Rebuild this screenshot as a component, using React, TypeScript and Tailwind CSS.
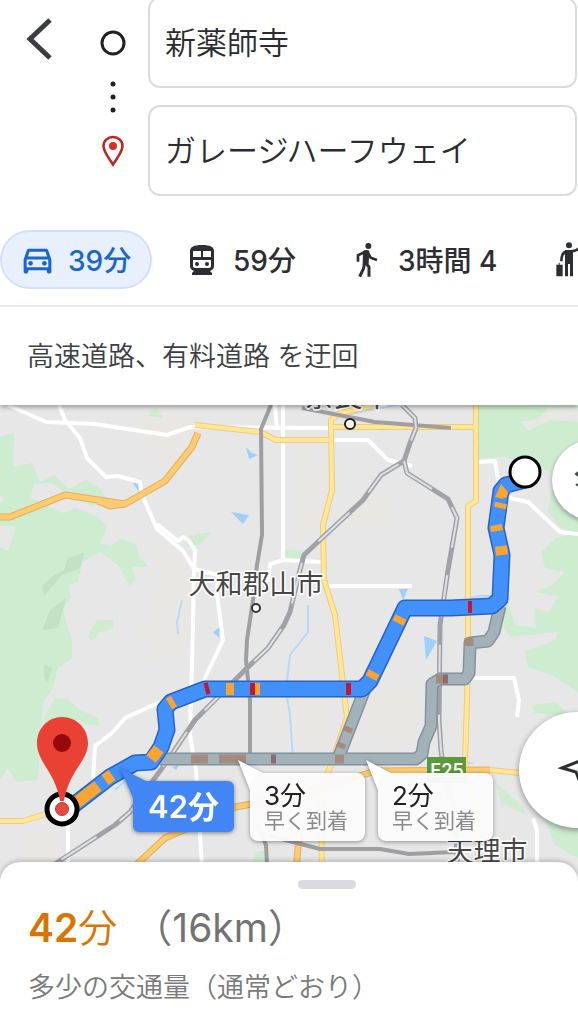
import { useState } from "react";
import { MdOutlineDirectionsCar } from "react-icons/md";

const FONT = "font-[Inter,'Noto_Sans_CJK_JP',sans-serif]";

type Mark = [number, number, number, number, string];

const AMBER = "#fba52f";
const RED = "#c4162c";
const MUTED = "#a48b80";

const greens = [
  "M0 436L14 433L13 467L32 463L40 482L54 475L69 489L86 480L101 489L107 500L92 506L68 494L52 483L34 484L30 498L62 513L75 508L97 516L107 527L100 543L110 546L122 539L136 545L140 558L149 567L132 567L136 578L130 586L118 565L100 552L82 562L78 582L68 585L71 597L63 610L66 622L72 640L72 658L58 668L52 690L43 702L42 722L38 780L16 782L8 768L0 780Z",
  "M148 416L156 407L163 418Z",
  "M182 537L211 532L200 545L188 547Z",
  "M97 620L113 620L113 629L100 632L92 641L88 638L90 631Z",
  "M55 698L68 699L80 710L98 718L100 725L88 725L78 720L60 722L48 735L44 718Z",
  "M285 550H303V560H285Z",
  "M253 862L256 852L266 850L268 870Z",
  "M480 405H578V535L561 528L548 512L551 492L562 478L541 468L505 457L475 459L472 442Z",
  "M578 533L555 538L541 552L545 568L565 572L552 585L535 592L558 596L549 612L534 608L536 628L515 625L507 600L503 628L511 637L558 632L555 640L525 652L528 667L551 675L578 692Z",
  "M532 705L555 702L570 716L534 713Z",
  "M495 782L521 805L527 815L501 803Z",
  "M545 818L578 824V858L555 845Z",
];

const greys = [
  "M0 525L16 527L8 551L0 547Z",
  "M0 494L4 500L0 503Z",
  "M521 422L538 419L548 408H578V422L550 420L528 431Z",
];

const darkGreens = [
  "M68 558L84 553L80 568L62 575L44 596L42 586L54 575L64 570Z",
  "M50 610L66 598L58 628L42 630Z",
  "M44 665L52 668L48 682L44 678Z",
];

const beige = [
  "M140 410H180L195 420L172 470L150 450L137 425Z",
  "M170 540L192 590L185 650L150 660L140 625L160 590L150 560Z",
  "M300 455L325 470L318 520L296 545Z",
  "M348 500L385 490L390 520L350 525Z",
  "M270 700L330 700L330 750L270 735Z",
  "M370 695L415 690L415 745L365 735Z",
  "M30 830L60 840L55 862H15Z",
];

const whiteRoads = [
  "M8 405L46 422L95 424L167 435L190 427L332 428",
  "M59 405L65 420L80 438L87 458L106 477L118 476L140 482L142 495L157 529L183 551L194 569L218 575L217 595L223 640L204 680",
  "M157 524L178 541L183 537L188 540L195 550L194 570L193 625L190 735L196 770L203 882",
  "M275 405L277 429",
  "M283 405V560L270 564L268 582",
  "M283 560L322 562",
  "M328 586H412",
  "M332 440H368L388 460L412 466",
  "M478 462L495 461L499 485",
  "M505 497L528 502L560 532L578 534",
  "M473 678H514L519 700L517 717",
  "M533 818L537 830V882",
  "M160 702L125 718L112 733L95 746L93 780",
  "M68 820V882",
];

const yellowRoads = [
  "M195 425L260 432L276 440H332",
  "M372 406L340 413L331 420L332 490L323 525L324 580L335 615L347 718L331 765L321 790L322 882",
  "M332 427H476",
  "M476 405V501L468 506L468 640L467 700L465 762L475 800L480 882",
  "M0 821H23L55 811",
  "M490 770L520 773",
];

const orangeRoads = [
  "M0 517H10L65 495L125 504L165 481L192 447L198 433",
  "M98 501L110 506L125 504",
  "M118 882L165 838L200 823L235 806",
  "M295 882L300 825",
  "M230 808L300 795L375 771L490 770",
];

const rails = [
  "M271 405L261 429L262 535L257 565L253 600L247 640L246 660L250 700L250 755",
  "M302 408L375 422L451 428",
  "M270 836L320 849L380 849L409 854L455 852",
  "M258 825L266 845L268 882",
];

const stripedRails = [
  "M402 405L415 418L416 428L410 443L404 461L381 475L363 500L320 540L304 555L300 570L290 612L284 625L268 648L245 670L195 720L168 760L130 812L115 825L50 867",
  "M404 461L407 473L448 499L457 518L448 570L440 625L439 720L441 750L445 780L455 810L458 882",
];

const water = [
  "M246 447L252 453L258 455L249 459Z",
  "M231 512L249 515L243 524Z",
  "M424 636L437 641L426 660Z",
  "M399 589L408 589L403 600Z",
  "M132 482L138 484L139 492Z",
  "M213 632L220 627L219 638Z",
  "M172 767L180 764L176 770Z",
  "M466 762L475 763L466 764Z",
];

const streams = [
  "M182 600L177 622L178 634",
  "M308 605V632L290 655L286 690L290 715L293 760",
  "M115 790L126 780L132 776",
  "M470 598L478 596H500",
  "M350 414L400 404",
];

const mainRoute =
  "M66 811L110 777L135 763L151 762L161 747L167 730L165 709L171 702L205 689H362L370 681L405 608L451 608L492 606L500 599L502 555L496 528L501 491L506 485L525 480";

const altRoutes = [
  "M500 606L494 632L488 641L470 643L469 673L465 679L440 679L432 684L431 726L424 742L422 754L416 759H160",
  "M365 689L339 756",
];

const altMarks: Mark[] = [
  [191, 759, 208, 759, MUTED],
  [219, 759, 246, 759, MUTED],
  [271, 759, 276, 759, "#8b6b6d"],
  [335, 759, 344, 759, MUTED],
  [349, 727, 347, 732, MUTED],
  [342, 743, 340, 748, MUTED],
  [436, 679, 443, 679, MUTED],
  [443, 679, 448, 679, "#8b6b6d"],
  [469, 638, 469, 646, MUTED],
];

const mainMarks: Mark[] = [
  [501, 503, 500, 508, AMBER],
  [496, 525, 497, 531, AMBER],
  [501, 546, 502, 555, AMBER],
  [401, 617, 398, 623, AMBER],
  [374, 672, 371, 678, AMBER],
  [468, 607, 472, 607, RED],
  [346, 689, 351, 689, RED],
  [255, 689, 260, 689, AMBER],
  [250, 689, 255, 689, RED],
  [226, 689, 234, 689, AMBER],
  [205, 689, 209, 688, RED],
  [169, 704, 174, 701, AMBER],
  [151, 759, 159, 749, AMBER],
  [105, 780, 112, 775, AMBER],
  [76, 803, 98, 786, AMBER],
];

function Strokes({ paths, color, width }: { paths: string[]; color: string; width: number }) {
  return (
    <g fill="none" stroke={color} strokeWidth={width} strokeLinejoin="round">
      {paths.map((d) => (
        <path key={d} d={d} />
      ))}
    </g>
  );
}

function Areas({ paths, color }: { paths: string[]; color: string }) {
  return (
    <g fill={color}>
      {paths.map((d) => (
        <path key={d} d={d} />
      ))}
    </g>
  );
}

function Marks({ marks, width }: { marks: Mark[]; width: number }) {
  return (
    <g strokeWidth={width}>
      {marks.map(([x1, y1, x2, y2, color]) => (
        <line key={`${x1}-${y1}`} x1={x1} y1={y1} x2={x2} y2={y2} stroke={color} />
      ))}
    </g>
  );
}

function MapLabel({ x, y, size, children }: { x: number; y: number; size: number; children: string }) {
  return (
    <text
      x={x}
      y={y}
      fontSize={size}
      textAnchor="middle"
      fill="#474747"
      stroke="#ffffff"
      strokeWidth="3"
      strokeLinejoin="round"
      paintOrder="stroke"
    >
      {children}
    </text>
  );
}

function MapCanvas() {
  return (
    <svg
      viewBox="0 405 578 477"
      preserveAspectRatio="xMinYMin slice"
      className="absolute inset-0 h-full w-full"
      role="img"
      aria-label="地図"
    >
      <rect x="0" y="405" width="578" height="477" fill="#e7e7e7" />
      <Areas paths={beige} color="#e9e7e3" />
      <Areas paths={greens} color="#ceeccf" />
      <Areas paths={greys} color="#e7e7e4" />
      <Areas paths={darkGreens} color="#c1e2c4" />
      <Areas paths={water} color="#9fd0fb" />
      <Strokes paths={streams} color="#b4dafa" width={2} />
      <Strokes paths={whiteRoads} color="#ffffff" width={4} />
      <Strokes paths={yellowRoads} color="#ecce78" width={6} />
      <Strokes paths={yellowRoads} color="#ffe698" width={4} />
      <Strokes paths={orangeRoads} color="#e6ae58" width={7} />
      <Strokes paths={orangeRoads} color="#fccb72" width={5} />
      <Strokes paths={rails} color="#9f9fa1" width={4} />
      <Strokes paths={stripedRails} color="#a0a2a6" width={5} />
      <g fill="none" stroke="#dfe1e4" strokeWidth="2" strokeDasharray="42 28">
        {stripedRails.map((d) => (
          <path key={d} d={d} />
        ))}
      </g>

      <Strokes paths={altRoutes} color="#84929b" width={13} />
      <Strokes paths={altRoutes} color="#a3b1b9" width={10} />
      <Marks marks={altMarks} width={9} />

      <Strokes paths={[mainRoute]} color="#2863c4" width={17} />
      <Strokes paths={[mainRoute]} color="#4290fb" width={14} />
      <Marks marks={mainMarks} width={12} />
      <path d="M495 497L501 484L508 492L507 497L502 499Z" fill={AMBER} />

      <circle cx="256" cy="608" r="4" fill="#ffffff" stroke="#333333" strokeWidth="2" />
      <MapLabel x={256} y={594} size={27}>大和郡山市</MapLabel>
      <MapLabel x={348} y={407} size={29}>奈良市</MapLabel>
      <circle cx="350" cy="424" r="5" fill="#ffffff" stroke="#1c1c1c" strokeWidth="2" />
      <MapLabel x={487} y={861} size={27}>天理市</MapLabel>

      <rect x="427" y="757" width="39" height="26" fill="#5a9a3c" />
      <text x="447" y="777" fontSize="18" fontWeight="600" textAnchor="middle" fill="#ffffff">
        E25
      </text>

      <circle cx="525" cy="472" r="15" fill="#ffffff" stroke="#000000" strokeWidth="3" />

      <circle cx="62" cy="809" r="15" fill="#ffffff" stroke="#000000" strokeWidth="5" />
      <path
        d="M62 717C76.500 717 88 728.500 88 743C88 754 81 762 75 772C69 782 66 790 64 801H60C58 790 55 782 49 772C43 762 37 754 37 743C37 728.500 48 717 62 717Z"
        fill="#e94235"
      />
      <circle cx="62" cy="743" r="9" fill="#950a0a" />
      <circle cx="62" cy="809" r="6.500" fill="#e34a42" stroke="#c8342e" strokeWidth="1" />
    </svg>
  );
}

function Tail({ className, d }: { className: string; d: string }) {
  return (
    <svg viewBox="0 0 30 30" className={`absolute size-[30px] ${className}`} aria-hidden="true">
      <path d={d} fill="currentColor" />
    </svg>
  );
}

function AltBubble({ place, time }: { place: string; time: string }) {
  return (
    <button
      type="button"
      className={`absolute flex h-[68px] w-[115px] flex-col rounded-lg bg-white/95 pt-2 pl-[14px] text-left drop-shadow-[0_1px_2px_rgba(0,0,0,0.4)] ${place}`}
    >
      <Tail className="-top-[13px] -left-[12px] text-white" d="M0 0L25 13H20L12 21V30Z" />
      <span className="relative text-[26px] leading-[30px] text-[#222222]">{time}</span>
      <span className="relative text-[21px] leading-5 whitespace-nowrap text-[#8a8a8a]">早く到着</span>
    </button>
  );
}

function TrainIcon() {
  return (
    <svg viewBox="0 0 26 32" className="h-8 w-[26px]" aria-hidden="true">
      <path
        fillRule="evenodd"
        fill="currentColor"
        d="M1 7C1 3 5 1 13 1S25 3 25 7V22C25 25 23 26 21 27L23 29V31H3V29L5 27C3 26 1 25 1 22ZM4 7V13H12V7ZM14 7V13H22V7ZM4 16V22C4 23 5 24 6 24H20C21 24 22 23 22 22V16Z"
      />
      <circle cx="8" cy="20" r="2" fill="currentColor" />
      <circle cx="18" cy="20" r="2" fill="currentColor" />
    </svg>
  );
}

function WalkIcon() {
  return (
    <svg viewBox="0 0 66 102" className="h-[34px] w-[22px]" aria-hidden="true">
      <circle cx="37" cy="9" r="9" fill="currentColor" />
      <path fill="currentColor" d="M21 24Q30 19 40 23L38 62L20 66Z" />
      <g fill="none" stroke="currentColor">
        <path d="M6 56V37L28 26" strokeWidth="8" />
        <path d="M34 26L44 44L63 51" strokeWidth="8" />
        <path d="M26 60L22 78L11 101" strokeWidth="9" />
        <path d="M28 58L39 72V101" strokeWidth="9" />
      </g>
    </svg>
  );
}

function HailIcon() {
  return (
    <svg viewBox="0 0 84 105" className="h-[35px] w-[28px]" aria-hidden="true">
      <circle cx="39" cy="10" r="9" fill="currentColor" />
      <path fill="currentColor" d="M27 24H51V103H42V66H36V103H27Z" />
      <g fill="none" stroke="currentColor">
        <path d="M32 28Q16 32 16 58" strokeWidth="8" />
        <path d="M46 28Q66 27 76 10" strokeWidth="8" />
      </g>
      <path fill="currentColor" d="M8 62H11V68H20V103H1V68H8Z" />
    </svg>
  );
}

const modes = [
  { id: "car", label: "39分", name: "車", icon: <MdOutlineDirectionsCar className="size-[37px]" />, box: "w-[152px] pl-4" },
  { id: "train", label: "59分", name: "電車", icon: <TrainIcon />, box: "w-[167px] pl-[29px]" },
  { id: "walk", label: "3時間 4", name: "徒歩", icon: <WalkIcon />, box: "w-[230px] pl-[27px]" },
  { id: "hail", label: "", name: "配車サービス", icon: <HailIcon />, box: "w-[60px]" },
];

export default function App() {
  const [mode, setMode] = useState("car");
  const [from, setFrom] = useState("新薬師寺");
  const [to, setTo] = useState("ガレージハーフウェイ");
  const field =
    "h-[91px] w-full rounded-xl border-2 border-[#dadce0] bg-white px-[15px] pb-[5px] text-[31px] font-[350] text-[#2b2c2f] outline-none";

  return (
    <div className={`flex min-h-screen flex-col overflow-hidden bg-white ${FONT}`}>
      <header className="relative z-10 bg-white shadow-[0_2px_5px_rgba(0,0,0,0.35)]">
        <div className="-mt-[3px] flex">
          <button type="button" aria-label="戻る" className="mt-5 ml-6 h-11 w-8 shrink-0">
            <svg viewBox="0 0 32 44" className="h-11 w-8" aria-hidden="true">
              <path d="M26 3L6 22L26 41" fill="none" stroke="#3c3d40" strokeWidth="5" />
            </svg>
          </button>
          <svg viewBox="0 0 30 140" className="mt-8 ml-[42px] h-[140px] w-[30px] shrink-0" aria-hidden="true">
            <circle cx="15" cy="14" r="11" fill="none" stroke="#202124" strokeWidth="3" />
            <g fill="#202124">
              <circle cx="15" cy="55" r="2.500" />
              <circle cx="15" cy="68" r="2.500" />
              <circle cx="15" cy="81" r="2.500" />
            </g>
            <path
              d="M15 108C9.500 108 5.500 112 5.500 117C5.500 123 11 129 15 135.500C19 129 24.500 123 24.500 117C24.500 112 20.500 108 15 108Z"
              fill="none"
              stroke="#c5221f"
              strokeWidth="2.500"
            />
            <circle cx="15" cy="117" r="4" fill="#d93025" />
          </svg>
          <div className="ml-5 flex min-w-0 flex-1 flex-col gap-[17px] pr-px">
            <input aria-label="出発地" className={field} value={from} onChange={(e) => setFrom(e.target.value)} />
            <input aria-label="目的地" className={field} value={to} onChange={(e) => setTo(e.target.value)} />
          </div>
        </div>

        <div role="tablist" className="mt-[34px] flex overflow-hidden border-b-2 border-[#e8e8ea] pb-4">
          {modes.map((m) => (
            <button
              key={m.id}
              type="button"
              role="tab"
              aria-label={m.name}
              aria-selected={mode === m.id}
              onClick={() => setMode(m.id)}
              className={`flex h-[59px] shrink-0 items-center rounded-full border-2 text-[28px] font-medium whitespace-nowrap ${m.box} ${
                mode === m.id ? "border-[#d2e1fa] bg-[#e8f0fe] text-[#1b66cd]" : "border-transparent text-[#2d2e31]"
              }`}
            >
              <span className="flex w-[38px] shrink-0 justify-center">{m.icon}</span>
              <span className="ml-3 pt-0.5">{m.label}</span>
            </button>
          ))}
        </div>

        <p className="flex h-[98px] items-center px-[27px] pt-0.5 text-[27px] font-[350] text-[#3c4043]">
          高速道路、有料道路 を迂回
        </p>
      </header>

      <main className="relative min-h-[477px] flex-1 overflow-hidden">
        <MapCanvas />
        <AltBubble place="top-[368px] left-[250px]" time="3分" />
        <AltBubble place="top-[368px] left-[378px]" time="2分" />
        <button
          type="button"
          className="absolute top-[376px] left-[133px] flex h-[51px] w-[101px] items-center justify-center rounded-md bg-[#4285f4] text-[31px] font-semibold text-white drop-shadow-[0_1px_2px_rgba(0,0,0,0.45)]"
        >
          <Tail className="-top-[13px] -left-[13px] text-[#4285f4]" d="M0 0L26 13L22 24L13 30Z" />
          <span className="relative pt-0.5">42分</span>
        </button>
        <button
          type="button"
          aria-label="レイヤ"
          className="absolute top-[35px] -right-[54px] size-20 rounded-full bg-white shadow-[0_2px_5px_rgba(0,0,0,0.35)]"
        >
          <svg viewBox="0 0 80 80" className="size-20" aria-hidden="true">
            <g fill="none" stroke="#3c4043" strokeWidth="2">
              <path d="M24 34L40 22L56 34L40 46Z" />
              <path d="M24 44L40 56L56 44" />
            </g>
          </svg>
        </button>
        <button
          type="button"
          aria-label="現在地"
          className="absolute top-[307px] -right-[57px] size-[116px] rounded-full bg-white shadow-[0_2px_6px_rgba(0,0,0,0.4)]"
        >
          <svg viewBox="0 0 116 116" className="size-[116px]" aria-hidden="true">
            <path d="M43 56L78 42L64 78L57 60Z" fill="none" stroke="#2d2e31" strokeWidth="3" />
          </svg>
        </button>
      </main>

      <section className="relative -mt-5 h-[162px] rounded-t-[20px] bg-white px-7 shadow-[0_-1px_5px_rgba(0,0,0,0.25)]">
        <div className="absolute top-[18px] left-[298px] h-[9px] w-[58px] rounded-full bg-[#dadae0]" />
        <h1 className="flex items-baseline pt-[38px] text-[39px] leading-[56px] whitespace-nowrap">
          <span className="font-semibold text-[#d97400]">42</span>
          <span className="font-[350] text-[#d97400]">分</span>
          <span className="ml-4 text-[#737373]">（16km）</span>
        </h1>
        <p className="mt-3 text-[27px] leading-[40px] font-[350] whitespace-nowrap text-[#7a7a7a]">
          多少の交通量（通常どおり）
        </p>
      </section>
    </div>
  );
}
